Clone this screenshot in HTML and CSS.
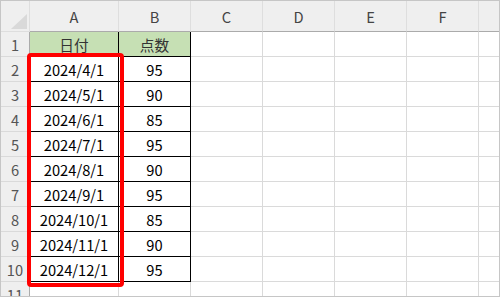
FILE: index.html
```html
<!DOCTYPE html>
<html lang="ja">

<head>
    <meta charset="UTF-8">
    <meta name="viewport" content="width=device-width, initial-scale=1.0">
    <title>Sheet</title>
    <link rel="stylesheet" href="styles.css">
</head>

<body>
    <div class="sheet">
        <div class="row head-row">
            <div class="cell corner">
                <svg width="28" height="30" viewBox="0 0 28 30">
                    <polygon points="26,13 26,28 10,28" fill="#d9d9d9" />
                </svg>
            </div>
            <div class="cell col-a">A</div>
            <div class="cell col">B</div>
            <div class="cell col">C</div>
            <div class="cell col">D</div>
            <div class="cell col">E</div>
            <div class="cell col">F</div>
            <div class="cell col"></div>
        </div>

        <div class="row">
            <div class="cell num">1</div>
            <div class="cell a data title">日付</div>
            <div class="cell b data title">点数</div>
            <div class="cell c"></div><div class="cell c"></div><div class="cell c"></div><div class="cell c"></div><div class="cell c"></div>
        </div>
        <div class="row">
            <div class="cell num">2</div>
            <div class="cell a data">2024/4/1</div>
            <div class="cell b data">95</div>
            <div class="cell c"></div><div class="cell c"></div><div class="cell c"></div><div class="cell c"></div><div class="cell c"></div>
        </div>
        <div class="row">
            <div class="cell num">3</div>
            <div class="cell a data">2024/5/1</div>
            <div class="cell b data">90</div>
            <div class="cell c"></div><div class="cell c"></div><div class="cell c"></div><div class="cell c"></div><div class="cell c"></div>
        </div>
        <div class="row">
            <div class="cell num">4</div>
            <div class="cell a data">2024/6/1</div>
            <div class="cell b data">85</div>
            <div class="cell c"></div><div class="cell c"></div><div class="cell c"></div><div class="cell c"></div><div class="cell c"></div>
        </div>
        <div class="row">
            <div class="cell num">5</div>
            <div class="cell a data">2024/7/1</div>
            <div class="cell b data">95</div>
            <div class="cell c"></div><div class="cell c"></div><div class="cell c"></div><div class="cell c"></div><div class="cell c"></div>
        </div>
        <div class="row">
            <div class="cell num">6</div>
            <div class="cell a data">2024/8/1</div>
            <div class="cell b data">90</div>
            <div class="cell c"></div><div class="cell c"></div><div class="cell c"></div><div class="cell c"></div><div class="cell c"></div>
        </div>
        <div class="row">
            <div class="cell num">7</div>
            <div class="cell a data">2024/9/1</div>
            <div class="cell b data">95</div>
            <div class="cell c"></div><div class="cell c"></div><div class="cell c"></div><div class="cell c"></div><div class="cell c"></div>
        </div>
        <div class="row">
            <div class="cell num">8</div>
            <div class="cell a data">2024/10/1</div>
            <div class="cell b data">85</div>
            <div class="cell c"></div><div class="cell c"></div><div class="cell c"></div><div class="cell c"></div><div class="cell c"></div>
        </div>
        <div class="row">
            <div class="cell num">9</div>
            <div class="cell a data">2024/11/1</div>
            <div class="cell b data">90</div>
            <div class="cell c"></div><div class="cell c"></div><div class="cell c"></div><div class="cell c"></div><div class="cell c"></div>
        </div>
        <div class="row">
            <div class="cell num">10</div>
            <div class="cell a data">2024/12/1</div>
            <div class="cell b data">95</div>
            <div class="cell c"></div><div class="cell c"></div><div class="cell c"></div><div class="cell c"></div><div class="cell c"></div>
        </div>
        <div class="row">
            <div class="cell num">11</div>
            <div class="cell a"></div>
            <div class="cell b"></div>
            <div class="cell c"></div><div class="cell c"></div><div class="cell c"></div><div class="cell c"></div><div class="cell c"></div>
        </div>

        <!-- 選択範囲の赤枠 -->
        <div class="mark"></div>
    </div>
</body>

</html>
```

FILE: styles.css
```css
* {
    margin: 0;
    padding: 0;
    box-sizing: border-box;
}

body {
    background: #fff;
    font-family: "Noto Sans CJK JP", "Noto Sans", sans-serif;
    font-size: 14.67px;
}

.sheet {
    position: relative;
    width: 500px;
    height: 297px;
    border: 1px solid #c6c6c6;
    overflow: hidden;
}

.row {
    display: flex;
    height: 25px;
}

.head-row {
    height: 31px;
}

.cell {
    flex: none;
    width: 72px;
    display: flex;
    align-items: center;
    justify-content: center;
    border-right: 1px solid #dadada;
    border-bottom: 1px solid #dadada;
    color: #000;
}

/* 見出し行・列 */
.head-row .cell {
    background: #efefef;
    border-right-color: #dedede;
    border-bottom-color: #ababab;
    color: #444;
}

.head-row .corner {
    width: 29px;
    align-items: flex-start;
    justify-content: flex-start;
    border-right-color: #dedede;
    border-bottom-color: #dedede;
}

.head-row .col-a {
    width: 89px;
}

.num {
    width: 29px;
    background: #efefef;
    border-right-color: #ababab;
    border-bottom-color: #dadada;
    color: #555;
}

.a {
    width: 89px;
}

.data {
    border-right-color: #000;
    border-bottom-color: #000;
}

.title {
    background: #c6e0b4;
    color: #333;
}

.mark {
    position: absolute;
    left: 26px;
    top: 52px;
    width: 97px;
    height: 234px;
    border: 4px solid #ff0000;
    border-radius: 4px;
}
```
